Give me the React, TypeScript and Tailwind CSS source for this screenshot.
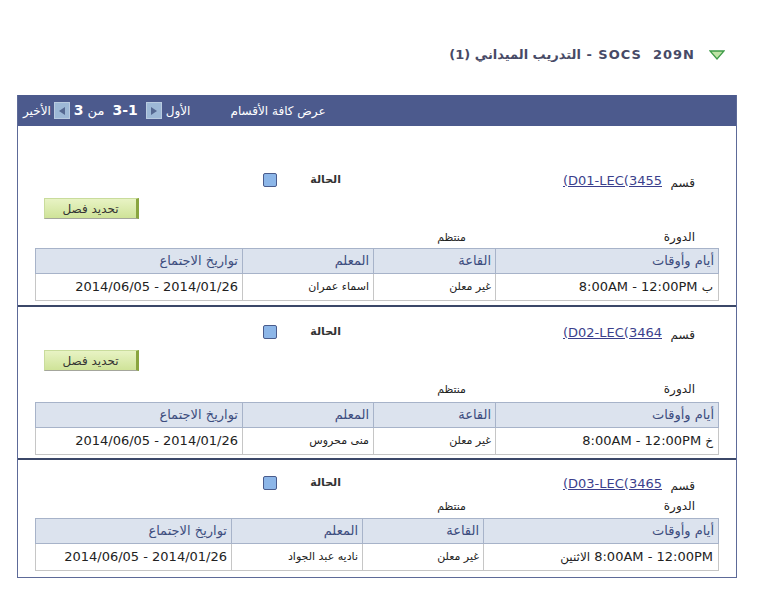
type Row = {
  day: string;
  dayLeft?: boolean;
  room: string;
  teacher: string;
  dates: string;
};

type Section = {
  code: string;
  row: Row;
  button: boolean;
  widths: [number, number, number, number];
};

const sections: Section[] = [
  {
    code: "(D01-LEC(3455",
    button: true,
    widths: [223, 122, 131, 207],
    row: {
      day: "ب",
      room: "غير معلن",
      teacher: "اسماء عمران",
      dates: "2014/06/05 - 2014/01/26",
    },
  },
  {
    code: "(D02-LEC(3464",
    button: true,
    widths: [223, 122, 131, 207],
    row: {
      day: "خ",
      room: "غير معلن",
      teacher: "منى محروس",
      dates: "2014/06/05 - 2014/01/26",
    },
  },
  {
    code: "(D03-LEC(3465",
    button: false,
    widths: [235, 121, 131, 196],
    row: {
      day: "الاثنين",
      dayLeft: true,
      room: "غير معلن",
      teacher: "ناديه عبد الجواد",
      dates: "2014/06/05 - 2014/01/26",
    },
  },
];

const headers = ["أيام وأوقات", "القاعة", "المعلم", "تواريخ الاجتماع"];
const TIME = "8:00AM - 12:00PM";

const Checkbox = () => (
  <span className="block h-[14px] w-[14px] rounded-[2px] border border-[#4a5c8c] bg-[#8cb6e8]" />
);

const NavArrow = ({ dir }: { dir: "left" | "right" }) => (
  <span className="flex h-[17px] w-[16px] items-center justify-center border border-[#b9cbe0] bg-[#9db8d6]">
    <svg width="6" height="8" viewBox="0 0 6 8">
      {dir === "right" ? (
        <polygon points="0,0 6,4 0,8" fill="#556891" />
      ) : (
        <polygon points="6,0 0,4 6,8" fill="#556891" />
      )}
    </svg>
  </span>
);

const MeetingTable = ({ row, widths }: { row: Row; widths: number[] }) => (
  <table className="w-[683px] table-fixed border-collapse">
    <colgroup>
      {widths.map((w, i) => (
        <col key={i} style={{ width: w }} />
      ))}
    </colgroup>
    <thead>
      <tr className="h-[25px]">
        {headers.map((h) => (
          <th
            key={h}
            className="border border-[#a7b3c9] bg-[#dce3ee] px-[4px] text-right text-[13px] font-normal text-[#3d4d7e]"
          >
            {h}
          </th>
        ))}
      </tr>
    </thead>
    <tbody>
      <tr className="h-[27px] text-[#222]">
        <td dir="ltr" className="border border-[#c6c6c6] px-[5px] text-right text-[13px]">
          {row.dayLeft ? (
            <>
              <bdi className="text-[12px]">{row.day}</bdi> <bdi>{TIME}</bdi>
            </>
          ) : (
            <>
              <bdi>{TIME}</bdi> <bdi className="text-[12px]">{row.day}</bdi>
            </>
          )}
        </td>
        <td className="border border-[#c6c6c6] px-[4px] text-[11px]">{row.room}</td>
        <td className="border border-[#c6c6c6] px-[4px] text-[11px]">{row.teacher}</td>
        <td dir="ltr" className="border border-[#c6c6c6] px-[4px] text-right text-[13px]">
          {row.dates}
        </td>
      </tr>
    </tbody>
  </table>
);

export default function App() {
  return (
    <div
      dir="rtl"
      className="h-[599px] w-[768px] overflow-hidden bg-white font-['DejaVu_Sans',Verdana,sans-serif]"
    >
      {/* title */}
      <div className="mt-[45px] flex h-[20px] items-center gap-[14px] pr-[43px]">
        <svg width="16" height="10" viewBox="0 0 16 10">
          <polygon points="1,1 15,1 8,9" fill="#bfe3a6" stroke="#3f9c48" strokeWidth="1.3" />
        </svg>
        <h1 className="whitespace-pre text-[13px] font-bold tracking-[1px] text-[#474a66]">
          SOCS  209N - التدريب الميداني (1)
        </h1>
      </div>

      <div className="ml-[17px] mr-[31px] mt-[30px] border-x border-b border-[#5d6a98]">
        {/* nav bar */}
        <div className="flex h-[31px] items-center justify-end bg-[#4c5a8d] pl-[5px] text-[12px] text-white">
          <span className="ml-[40px]">عرض كافة الأقسام</span>
          <span className="ml-[4px]">الأول</span>
          <NavArrow dir="right" />
          <span className="mx-[8px] text-[14px] font-bold" dir="ltr">
            3-1
          </span>
          <span className="text-[13px]">من</span>
          <span className="mx-[4px] text-[14px] font-bold">3</span>
          <NavArrow dir="left" />
          <span className="mr-[3px]">الأخير</span>
        </div>

        {sections.map((s, i) => {
          const pad = i === 0 ? "pt-[44px]" : i === 1 ? "pt-[15px]" : "pt-[13px]";
          const last = i === sections.length - 1;
          return (
            <section
              key={s.code}
              className={`${pad} ${last ? "pb-[6px]" : i === 0 ? "border-b-2 border-[#3b4768] pb-[4px]" : "border-b-2 border-[#3b4768] pb-[3px]"}`}
            >
              <div className="flex h-[20px] items-center pr-[41px]">
                <span className="w-[33px] pt-[6px] text-[12px] text-[#222]">قسم</span>
                <span className="w-[321px]">
                  <a
                    href="#"
                    dir="ltr"
                    className="inline-block text-[13px] text-[#3b3f8c] underline"
                  >
                    {s.code}
                  </a>
                </span>
                <span className="w-[64px] text-[11px] font-semibold text-[#333]">الحالة</span>
                <Checkbox />
              </div>

              {s.button && (
                <div className="mt-[8px] flex justify-end pl-[26px]">
                  <button className="h-[21px] w-[95px] border border-[#c9dc9c] border-b-[#a4a69c] border-r-[3px] border-r-[#89a53f] bg-gradient-to-b from-[#e8f3c4] to-[#cfe398] text-[12px] text-[#333]">
                    تحديد فصل
                  </button>
                </div>
              )}

              <div
                className={`${s.button ? "mt-[9px]" : "mt-[4px]"} flex h-[18px] items-center pr-[41px]`}
              >
                <span className="w-[33px] text-[12px] text-[#222]">الدورة</span>
                <span className="ms-[196px] mt-[3px] text-[11px] text-[#222]">منتظم</span>
              </div>

              <div className={`${i === 0 ? "mt-[2px]" : i === 1 ? "mt-[4px]" : "mt-[3px]"} px-[17px]`}>
                <MeetingTable row={s.row} widths={s.widths} />
              </div>
            </section>
          );
        })}
      </div>
    </div>
  );
}
